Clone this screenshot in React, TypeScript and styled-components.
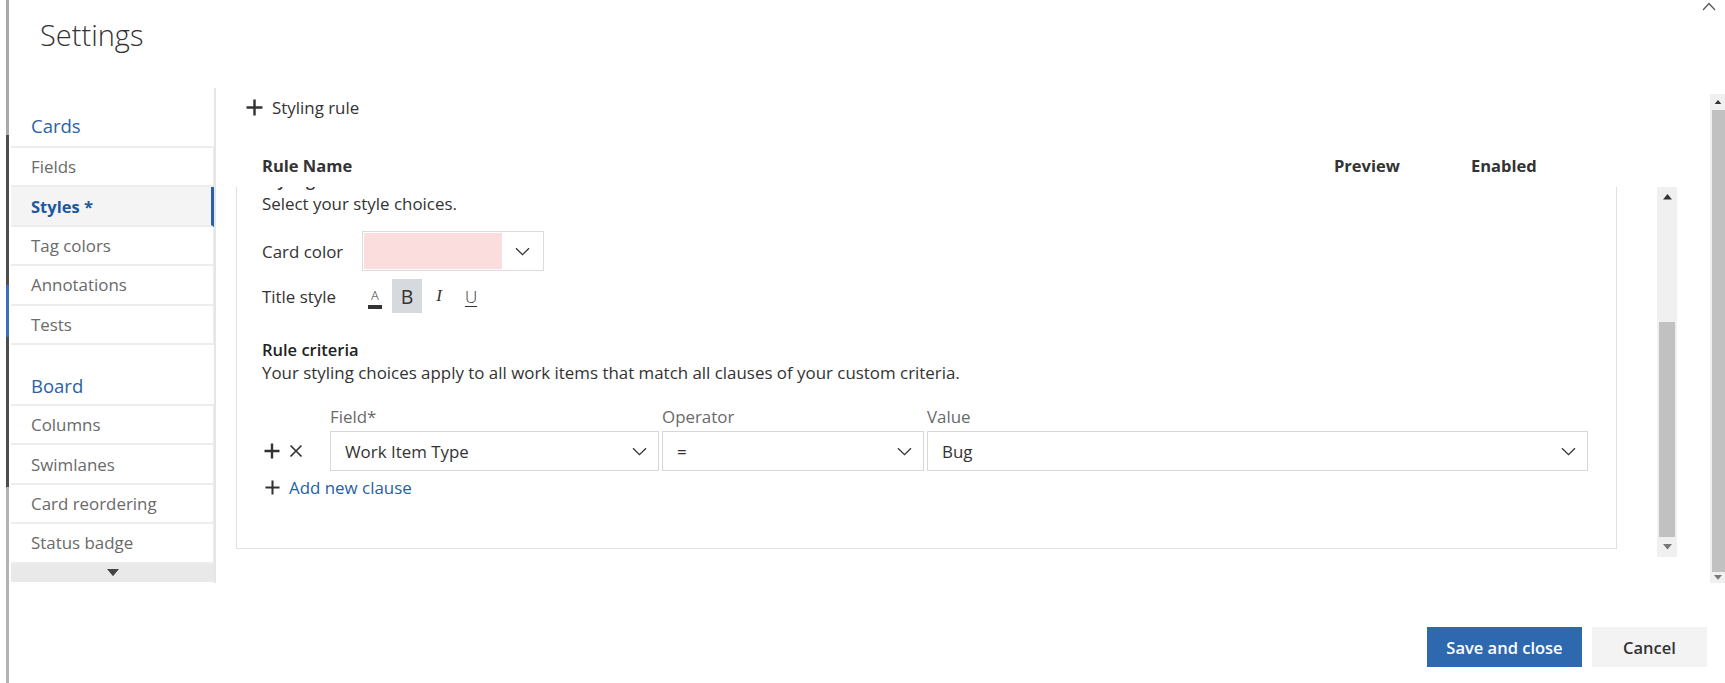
import React from "react";
import styled, { createGlobalStyle } from "styled-components";

const GlobalStyle = createGlobalStyle`
  html, body { margin: 0; padding: 0; background: #ffffff; }
  body { font-family: "Open Sans", "Noto Sans", sans-serif; color: #333333; }
  * { box-sizing: border-box; }
`;

const Page = styled.div`
  width: 1725px;
  height: 683px;
  display: flex;
  overflow: hidden;
  background: #fff;
`;

const LeftRail = styled.div`
  width: 3px;
  margin-left: 6px;
  margin-right: 2px;
  height: 100%;
  display: flex;
  flex-direction: column;
  background: #b3b3b3;
  flex-shrink: 0;
`;

const RailSeg = styled.div<{ $h: number; $c: string }>`
  height: ${(p) => p.$h}px;
  background: ${(p) => p.$c};
  flex-shrink: 0;
`;

const Main = styled.div`
  flex: 1;
  min-width: 0;
  display: flex;
  flex-direction: column;
`;

const Header = styled.header`
  height: 88px;
  display: flex;
  justify-content: space-between;
  align-items: flex-start;
  flex-shrink: 0;
`;

const Title = styled.h1`
  margin: 0;
  padding: 15px 0 0 29px;
  font-size: 29px;
  font-weight: 300;
  line-height: 40px;
  color: #333;
`;

const CollapseIcon = styled.div`
  margin: 2px 9px 0 0;
  display: flex;
`;

const Body = styled.div`
  height: 495px;
  display: flex;
  flex-shrink: 0;
`;

const Nav = styled.nav`
  width: 205px;
  border-right: 2px solid #e6e6e6;
  display: flex;
  flex-direction: column;
  overflow: hidden;
  flex-shrink: 0;
`;

const NavHeading = styled.div<{ $top: number; $bottom: number }>`
  padding: ${(p) => p.$top}px 0 ${(p) => p.$bottom}px 20px;
  font-size: 18.5px;
  line-height: 24px;
  color: #2a62a7;
`;

const NavList = styled.div`
  border-top: 2px solid #ededed;
  display: flex;
  flex-direction: column;
`;

const NavItem = styled.div<{ $selected?: boolean }>`
  height: 39.4px;
  flex-shrink: 0;
  display: flex;
  align-items: center;
  padding-left: 20px;
  border-bottom: 2px solid #ededed;
  border-right: ${(p) => (p.$selected ? "3px solid #2a62a7" : "1px solid #ececec")};
  background: ${(p) => (p.$selected ? "#f4f4f4" : "#fff")};
  font-size: ${(p) => (p.$selected ? 16.5 : 16.9)}px;
  font-weight: ${(p) => (p.$selected ? 700 : 400)};
  color: ${(p) => (p.$selected ? "#2058a0" : "#6a6a6a")};
`;

const NavScroll = styled.div`
  height: 18px;
  background: #e9e9e9;
  display: flex;
  align-items: center;
  justify-content: center;
  flex-shrink: 0;
`;

const Content = styled.section`
  flex: 1;
  min-width: 0;
  padding-left: 20px;
  display: flex;
  flex-direction: column;
`;

const AddRuleBar = styled.div`
  margin: 7px 0 0 10px;
  height: 24px;
  display: flex;
  align-items: center;
  gap: 9px;
  font-size: 16.9px;
  color: #333;
`;

const TableHeader = styled.div`
  margin-top: 35px;
  height: 24px;
  padding-left: 26px;
  display: grid;
  grid-template-columns: 1072px 137px auto;
  font-size: 16.5px;
  font-weight: 700;
  line-height: 24px;
  color: #333;
`;

const ScrollArea = styled.div`
  margin-top: 9px;
  height: 370px;
  width: 1441px;
  display: flex;
`;

const Viewport = styled.div`
  flex: 1;
  overflow: hidden;
`;

const Panel = styled.div`
  width: 1381px;
  margin-top: -19px;
  border: 1px solid #e1e1e1;
  border-top: none;
  padding: 0 28px 49px 25px;
  display: flex;
  flex-direction: column;
`;

const SectionTitle = styled.div`
  height: 24px;
  line-height: 24px;
  font-size: 16.5px;
  font-weight: 600;
  color: #333;
`;

const Text = styled.div<{ $weight?: number; $mt?: number }>`
  margin-top: ${(p) => p.$mt ?? 0}px;
  font-size: ${(p) => (p.$weight ? 16.5 : 16.9)}px;
  line-height: 24px;
  font-weight: ${(p) => p.$weight ?? 400};
  color: ${(p) => (p.$weight ? "#222" : "#333")};
`;

const FormRow = styled.div<{ $mt: number; $h: number; $label: number }>`
  margin-top: ${(p) => p.$mt}px;
  height: ${(p) => p.$h}px;
  display: grid;
  grid-template-columns: ${(p) => p.$label}px auto;
  justify-content: start;
  align-items: center;
  font-size: 16.9px;
  color: #333;
`;

const ColorPicker = styled.div`
  width: 182px;
  height: 40px;
  border: 1px solid #dcdcdc;
  display: flex;
  padding: 1px;
`;

const Swatch = styled.div`
  flex: 1;
  background: #fbdddd;
`;

const PickerArrow = styled.div`
  width: 40px;
  display: flex;
  align-items: center;
  justify-content: center;
`;

const StyleButtons = styled.div`
  display: flex;
  gap: 2px;
`;

const StyleButton = styled.div<{ $active?: boolean }>`
  width: 30px;
  height: 34px;
  display: flex;
  align-items: center;
  justify-content: center;
  background: ${(p) => (p.$active ? "#d6d9de" : "transparent")};
  color: #333;
`;

const ColorA = styled.div`
  display: flex;
  flex-direction: column;
  align-items: center;
  padding-top: 4px;
  font-size: 13px;
  font-weight: 300;
  line-height: 15px;
`;

const ColorBar = styled.div`
  width: 14px;
  height: 4px;
  background: #333;
  margin-top: 2px;
`;

const Glyph = styled.span<{ $kind: "b" | "i" | "u" }>`
  font-size: ${(p) => (p.$kind === "b" ? 19.5 : 17)}px;
  font-weight: ${(p) => (p.$kind === "b" ? 500 : 300)};
  font-style: ${(p) => (p.$kind === "i" ? "italic" : "normal")};
  text-decoration: ${(p) => (p.$kind === "u" ? "underline" : "none")};
  text-underline-offset: 3px;
  font-family: ${(p) => (p.$kind === "i" ? '"Liberation Serif", serif' : "inherit")};
`;

const CriteriaGrid = styled.div<{ $mt: number; $h: number }>`
  margin-top: ${(p) => p.$mt}px;
  height: ${(p) => p.$h}px;
  display: grid;
  grid-template-columns: 65px 329px 262px 661px;
  column-gap: 3px;
  align-items: center;
`;

const FieldLabel = styled.div`
  font-size: 16.9px;
  line-height: 24px;
  color: #6a6a6a;
`;

const ClauseActions = styled.div`
  display: flex;
  align-items: center;
  gap: 9px;
  padding-left: 2px;
`;

const Dropdown = styled.div`
  height: 40px;
  border: 1px solid #d8d8d8;
  display: flex;
  align-items: center;
  justify-content: space-between;
  padding: 0 11px 0 14px;
  font-size: 16.9px;
  color: #333;
`;

const AddClause = styled.div`
  margin-top: 4px;
  height: 24px;
  padding-left: 3px;
  display: flex;
  align-items: center;
  gap: 9px;
  font-size: 16.9px;
  color: #1f5fa6;
`;

const ScrollTrack = styled.div<{ $w: number; $mt?: number; $h?: number }>`
  width: ${(p) => p.$w}px;
  margin-top: ${(p) => p.$mt ?? 0}px;
  height: ${(p) => (p.$h ? `${p.$h}px` : "100%")};
  background: #f0f0f0;
  display: flex;
  flex-direction: column;
  flex-shrink: 0;
`;

const ScrollArrow = styled.div<{ $h: number }>`
  height: ${(p) => p.$h}px;
  display: flex;
  align-items: center;
  justify-content: center;
  flex-shrink: 0;
`;

const ScrollGap = styled.div`
  flex: 1;
`;

const ScrollThumb = styled.div<{ $h?: number; $mr: number }>`
  ${(p) => (p.$h ? `height: ${p.$h}px; flex-shrink: 0;` : "flex: 1;")}
  margin: 0 ${(p) => p.$mr}px 0 2px;
  background: #c1c1c1;
`;

const Footer = styled.footer`
  flex: 1;
  display: flex;
  justify-content: flex-end;
  align-items: flex-start;
  gap: 10px;
  padding: 44px 18px 0 0;
`;

const Button = styled.button<{ $primary?: boolean }>`
  height: 40px;
  width: ${(p) => (p.$primary ? 155 : 115)}px;
  border: none;
  background: ${(p) => (p.$primary ? "#2e69b0" : "#f3f3f3")};
  color: ${(p) => (p.$primary ? "#fff" : "#333")};
  font-family: inherit;
  font-size: 16.5px;
  font-weight: 600;
  padding: 0;
`;

const ChevronDown = () => (
  <svg width="15" height="9" viewBox="0 0 15 9" fill="none">
    <path d="M1 1.2l6.5 6.5 6.5-6.5" stroke="#333" strokeWidth="1.3" />
  </svg>
);

const ChevronUp = () => (
  <svg width="14" height="9" viewBox="0 0 14 9" fill="none">
    <path d="M1 8l6-6.5 6 6.5" stroke="#555" strokeWidth="1.2" />
  </svg>
);

const Plus = ({ size = 16, w = 2.2 }: { size?: number; w?: number }) => (
  <svg width={size} height={size} viewBox="0 0 16 16" fill="none">
    <path d="M8 0.5v15M0.5 8h15" stroke="#333" strokeWidth={w} />
  </svg>
);

const Cross = () => (
  <svg width="14" height="14" viewBox="0 0 14 14" fill="none">
    <path d="M1.5 1.5l11 11M12.5 1.5l-11 11" stroke="#333" strokeWidth="1.7" />
  </svg>
);

const TriUp = ({ w = 9 }: { w?: number }) => (
  <svg width={w} height={w * 0.6} viewBox="0 0 10 6">
    <polygon points="0,6 5,0 10,6" fill="#333" />
  </svg>
);

const TriDown = ({ w = 9, c = "#555" }: { w?: number; c?: string }) => (
  <svg width={w} height={w * 0.6} viewBox="0 0 10 6">
    <polygon points="0,0 10,0 5,6" fill={c} />
  </svg>
);

const cardItems = ["Fields", "Styles *", "Tag colors", "Annotations", "Tests"];
const boardItems = ["Columns", "Swimlanes", "Card reordering", "Status badge"];

export default function App() {
  return (
    <>
      <GlobalStyle />
      <Page>
        <LeftRail>
          <RailSeg $h={135} $c="#a9a9a9" />
          <RailSeg $h={150} $c="#4d4d4d" />
          <RailSeg $h={52} $c="#3d6fb8" />
          <RailSeg $h={150} $c="#4d4d4d" />
        </LeftRail>
        <Main>
          <Header>
            <Title>Settings</Title>
            <CollapseIcon>
              <ChevronUp />
            </CollapseIcon>
          </Header>
          <Body>
            <Nav>
              <NavHeading $top={26} $bottom={8}>Cards</NavHeading>
              <NavList>
                {cardItems.map((item) => (
                  <NavItem key={item} $selected={item === "Styles *"}>
                    {item}
                  </NavItem>
                ))}
              </NavList>
              <NavHeading $top={29} $bottom={6}>Board</NavHeading>
              <NavList>
                {boardItems.map((item) => (
                  <NavItem key={item}>{item}</NavItem>
                ))}
              </NavList>
              <NavScroll>
                <TriDown w={12} c="#444" />
              </NavScroll>
            </Nav>
            <Content>
              <AddRuleBar>
                <Plus size={17} w={2.3} />
                <span>Styling rule</span>
              </AddRuleBar>
              <TableHeader>
                <span>Rule Name</span>
                <span>Preview</span>
                <span>Enabled</span>
              </TableHeader>
              <ScrollArea>
                <Viewport>
                  <Panel>
                    <SectionTitle>Styling</SectionTitle>
                    <Text>Select your style choices.</Text>
                    <FormRow $mt={15} $h={40} $label={100}>
                      <span>Card color</span>
                      <ColorPicker>
                        <Swatch />
                        <PickerArrow>
                          <ChevronDown />
                        </PickerArrow>
                      </ColorPicker>
                    </FormRow>
                    <FormRow $mt={8} $h={34} $label={98}>
                      <span>Title style</span>
                      <StyleButtons>
                        <StyleButton>
                          <ColorA>
                            A
                            <ColorBar />
                          </ColorA>
                        </StyleButton>
                        <StyleButton $active>
                          <Glyph $kind="b">B</Glyph>
                        </StyleButton>
                        <StyleButton>
                          <Glyph $kind="i">I</Glyph>
                        </StyleButton>
                        <StyleButton>
                          <Glyph $kind="u">U</Glyph>
                        </StyleButton>
                      </StyleButtons>
                    </FormRow>
                    <Text $weight={600} $mt={25}>Rule criteria</Text>
                    <Text $mt={-1}>
                      Your styling choices apply to all work items that match all clauses of your custom criteria.
                    </Text>
                    <CriteriaGrid $mt={20} $h={24}>
                      <span />
                      <FieldLabel>Field*</FieldLabel>
                      <FieldLabel>Operator</FieldLabel>
                      <FieldLabel>Value</FieldLabel>
                    </CriteriaGrid>
                    <CriteriaGrid $mt={2} $h={40}>
                      <ClauseActions>
                        <Plus size={16} w={2.4} />
                        <Cross />
                      </ClauseActions>
                      <Dropdown>
                        <span>Work Item Type</span>
                        <ChevronDown />
                      </Dropdown>
                      <Dropdown>
                        <span>=</span>
                        <ChevronDown />
                      </Dropdown>
                      <Dropdown>
                        <span>Bug</span>
                        <ChevronDown />
                      </Dropdown>
                    </CriteriaGrid>
                    <AddClause>
                      <Plus size={15} w={2.2} />
                      <span>Add new clause</span>
                    </AddClause>
                  </Panel>
                </Viewport>
                <ScrollTrack $w={20}>
                  <ScrollArrow $h={20}>
                    <TriUp w={9} />
                  </ScrollArrow>
                  <ScrollGap />
                  <ScrollThumb $h={215} $mr={2} />
                  <ScrollArrow $h={20}>
                    <TriDown w={9} c="#777" />
                  </ScrollArrow>
                </ScrollTrack>
              </ScrollArea>
            </Content>
            <ScrollTrack $w={15} $mt={6} $h={489}>
              <ScrollArrow $h={16}>
                <TriUp w={8} />
              </ScrollArrow>
              <ScrollThumb $mr={0} />
              <ScrollArrow $h={11}>
                <TriDown w={8} c="#777" />
              </ScrollArrow>
            </ScrollTrack>
          </Body>
          <Footer>
            <Button $primary>Save and close</Button>
            <Button>Cancel</Button>
          </Footer>
        </Main>
      </Page>
    </>
  );
}
